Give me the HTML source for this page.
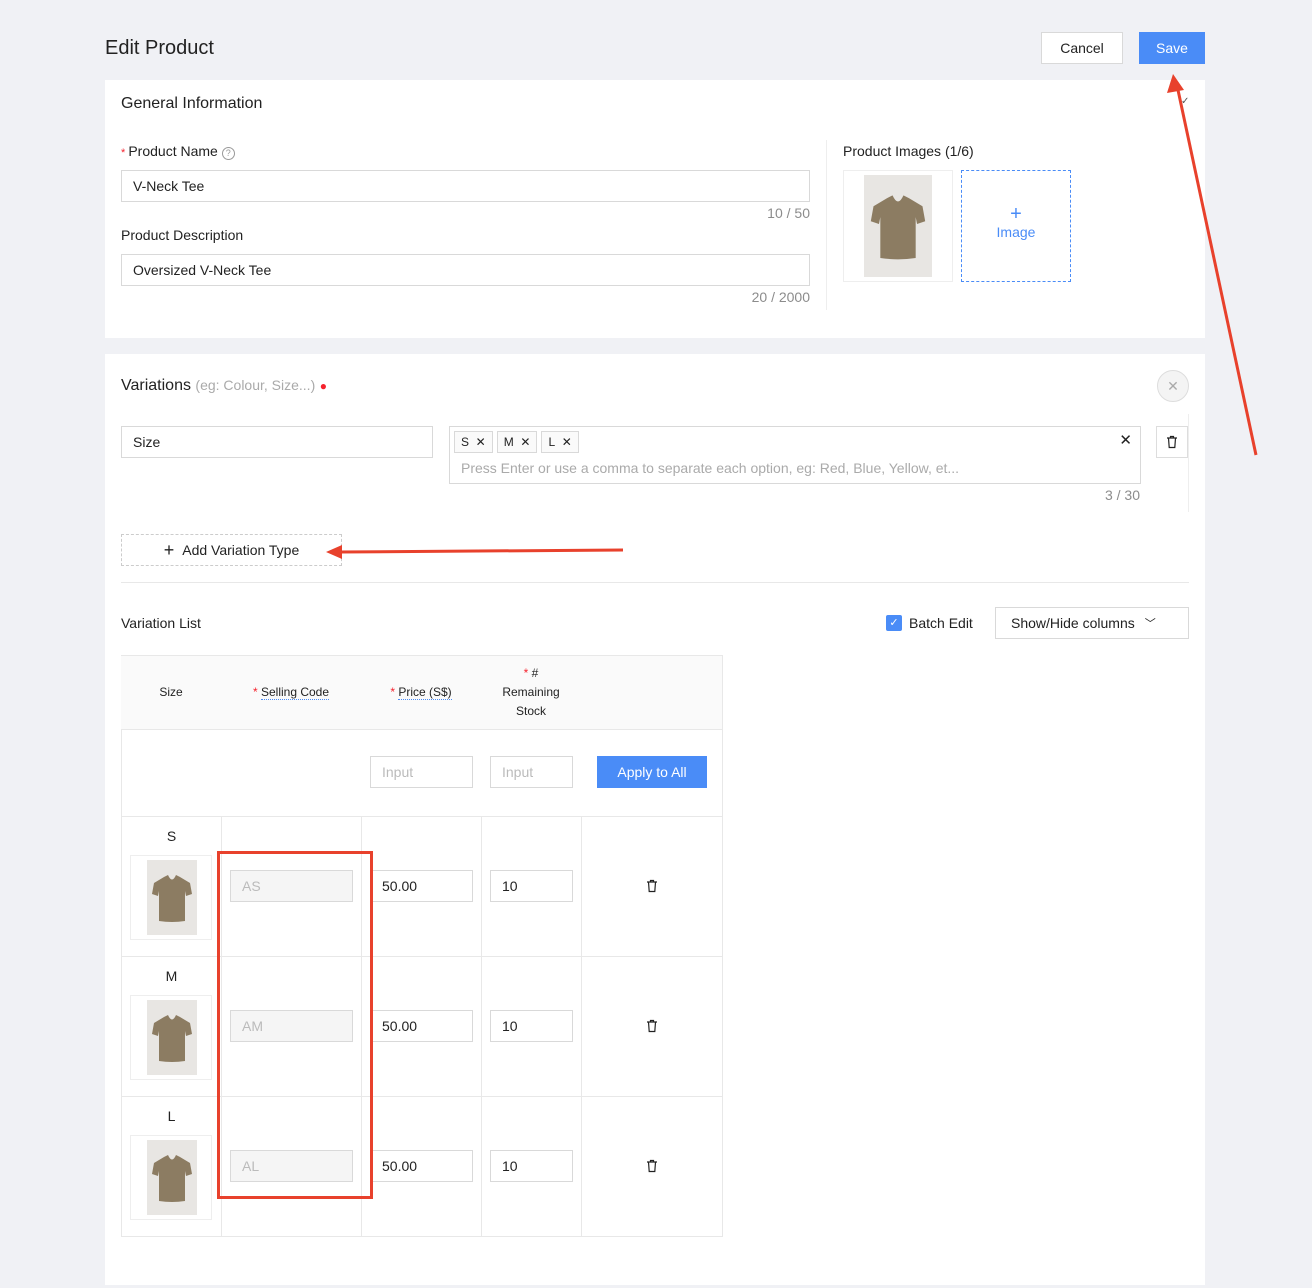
<!DOCTYPE html>
<html><head><meta charset="utf-8"><style>
*{box-sizing:border-box;margin:0;padding:0}
body{width:1312px;height:1288px;background:#f0f1f5;font-family:"Liberation Sans",sans-serif;color:#222;position:relative;overflow:hidden;font-size:14px}
.a{position:absolute}
.card{position:absolute;background:#fff}
.inp{position:absolute;border:1px solid #d9d9d9;background:#fff;font-size:14px;padding-left:11px;display:flex;align-items:center;color:#222}
.muted{color:#8c8c8c}
.red{color:#f5222d}
.tag{display:inline-block;border:1px solid #d9d9d9;background:#fafafa;font-size:12px;height:22px;line-height:20px;padding:0 6px;margin-right:4px}
.cell{position:absolute;border-right:1px solid #e8e8e8;border-bottom:1px solid #e8e8e8}
.th{font-size:12px;display:flex;align-items:center;justify-content:center;text-align:center;line-height:19px;background:#fafafa}
.u{border-bottom:1px dotted #4a8cf7}
.thumb{position:absolute;border:1px solid #eee;background:#fff}
</style></head><body>
<svg width="0" height="0" style="position:absolute"><defs>
<symbol id="tee" viewBox="0 0 50 75"><rect width="50" height="75" fill="#e8e6e3"/><path d="M17 17 L21 15 Q25 24 29 15 L33 17 L43 23 L45 34 L39 36 L38 31 L38 61 Q25 63 12 61 L12 31 L11 36 L5 34 L7 23 Z" fill="#8c7c62"/></symbol>
<symbol id="trash" viewBox="0 0 12 14"><path d="M1 3h10M4.5 3V1.5h3V3M2.5 3l.7 9.5h5.6l.7-9.5" fill="none" stroke="#222" stroke-width="1.2"/></symbol>
</defs></svg>

<div class="a" style="left:105px;top:37px;font-size:20px">Edit Product</div>
<div class="a" style="left:1041px;top:32px;width:82px;height:32px;border:1px solid #d9d9d9;background:#fff;display:flex;align-items:center;justify-content:center;font-size:14px">Cancel</div>
<div class="a" style="left:1139px;top:32px;width:66px;height:32px;background:#4a8cf7;color:#fff;display:flex;align-items:center;justify-content:center;font-size:14px">Save</div>

<div class="card" style="left:105px;top:80px;width:1100px;height:258px">
 <div class="a" style="left:16px;top:15px;font-size:16px">General Information</div>
 <div class="a" style="left:1076px;top:16px;font-size:10px;color:#555">✓</div>
 <div class="a" style="left:16px;top:63px;font-size:14px"><span class="red" style="font-size:11px">* </span>Product Name <span style="display:inline-block;width:13px;height:13px;border:1px solid #999;border-radius:50%;font-size:9px;text-align:center;line-height:11px;color:#999">?</span></div>
 <div class="inp" style="left:16px;top:90px;width:689px;height:32px">V-Neck Tee</div>
 <div class="a muted" style="left:600px;top:125px;width:105px;text-align:right">10 / 50</div>
 <div class="a" style="left:16px;top:147px">Product Description</div>
 <div class="inp" style="left:16px;top:174px;width:689px;height:32px">Oversized V-Neck Tee</div>
 <div class="a muted" style="left:600px;top:209px;width:105px;text-align:right">20 / 2000</div>
 <div class="a" style="left:721px;top:60px;width:1px;height:170px;background:#eee"></div>
 <div class="a" style="left:738px;top:63px">Product Images (1/6)</div>
 <div class="thumb" style="left:738px;top:90px;width:110px;height:112px"><svg class="a" style="left:20px;top:4px" width="68" height="102" preserveAspectRatio="none"><use href="#tee"/></svg></div>
 <div class="a" style="left:856px;top:90px;width:110px;height:112px;border:1px dashed #4a8cf7;color:#4a8cf7;text-align:center;padding-top:34px;line-height:18px"><div style="font-size:20px">+</div>Image</div>
</div>

<div class="card" style="left:105px;top:354px;width:1100px;height:931px">
 <div class="a" style="left:16px;top:23px;font-size:16px">Variations <span style="font-size:14px;color:#aaa">(eg: Colour, Size...)</span> <span class="red" style="font-size:12px">●</span></div>
 <div class="a" style="left:1052px;top:16px;width:32px;height:32px;border:1px solid #ddd;border-radius:50%;background:#f4f4f4;color:#aaa;text-align:center;line-height:30px;font-size:14px">✕</div>
 <div class="inp" style="left:16px;top:72px;width:312px;height:32px">Size</div>
 <div class="a" style="left:344px;top:72px;width:692px;height:58px;border:1px solid #d9d9d9">
  <div class="a" style="left:4px;top:4px"><span class="tag">S&nbsp; ✕</span><span class="tag">M&nbsp; ✕</span><span class="tag">L&nbsp; ✕</span></div>
  <div class="a" style="right:8px;top:4px;font-size:15px">✕</div>
  <div class="a" style="left:11px;top:33px;color:#aaa;font-size:14px">Press Enter or use a comma to separate each option, eg: Red, Blue, Yellow, et...</div>
 </div>
 <div class="a muted" style="left:960px;top:133px;width:75px;text-align:right">3 / 30</div>
 <div class="a" style="left:1083px;top:60px;width:1px;height:98px;background:#eee"></div>
 <div class="a" style="left:1051px;top:72px;width:32px;height:32px;border:1px solid #ddd;display:flex;align-items:center;justify-content:center"><svg width="12" height="14"><use href="#trash"/></svg></div>
 <div class="a" style="left:16px;top:180px;width:221px;height:32px;border:1px dashed #ccc;display:flex;align-items:center;justify-content:center;font-size:14px"><span style="font-size:18px;margin-right:8px">+</span>Add Variation Type</div>
 <div class="a" style="left:16px;top:228px;width:1068px;height:1px;background:#e8e8e8"></div>
 <div class="a" style="left:16px;top:261px">Variation List</div>
 <div class="a" style="left:781px;top:261px;width:16px;height:16px;background:#4a8cf7;border-radius:2px;color:#fff;font-size:11px;text-align:center;line-height:16px">✓</div>
 <div class="a" style="left:804px;top:261px">Batch Edit</div>
 <div class="a" style="left:890px;top:253px;width:194px;height:32px;border:1px solid #d9d9d9;display:flex;align-items:center;padding-left:15px">Show/Hide columns <span style="margin-left:10px;font-size:11px">﹀</span></div>
</div>

<!-- table -->
<div class="a" style="left:121px;top:655px;width:602px;height:582px;border-left:1px solid #e8e8e8;border-top:1px solid #e8e8e8"></div>
<div class="cell th" style="left:121px;top:656px;width:101px;height:74px">Size</div>
<div class="cell th" style="left:221px;top:656px;width:141px;height:74px"><span><span class="red">* </span><span class="u">Selling Code</span></span></div>
<div class="cell th" style="left:361px;top:656px;width:121px;height:74px"><span><span class="red">* </span><span class="u">Price (S$)</span></span></div>
<div class="cell th" style="left:481px;top:656px;width:101px;height:74px"><span><span class="red">* </span>#<br>Remaining<br>Stock</span></div>
<div class="cell th" style="left:581px;top:656px;width:142px;height:74px"></div>
<div class="cell" style="left:121px;top:729px;width:602px;height:88px;border-left:0"></div>
<div class="inp" style="left:370px;top:756px;width:103px;height:32px;color:#bbb">Input</div>
<div class="inp" style="left:490px;top:756px;width:83px;height:32px;color:#bbb">Input</div>
<div class="a" style="left:597px;top:756px;width:110px;height:32px;background:#4a8cf7;color:#fff;display:flex;align-items:center;justify-content:center;font-size:14px">Apply to All</div>

<!-- row S -->
<div class="cell" style="left:121px;top:816px;width:101px;height:141px"></div><div class="cell" style="left:221px;top:816px;width:141px;height:141px"></div><div class="cell" style="left:361px;top:816px;width:121px;height:141px"></div><div class="cell" style="left:481px;top:816px;width:101px;height:141px"></div><div class="cell" style="left:581px;top:816px;width:142px;height:141px"></div>
<div class="a" style="left:121px;top:828px;width:101px;text-align:center">S</div>
<div class="thumb" style="left:130px;top:855px;width:82px;height:85px"><svg class="a" style="left:16px;top:4px" width="50" height="75" preserveAspectRatio="none"><use href="#tee"/></svg></div>
<div class="inp" style="left:230px;top:870px;width:123px;height:32px;background:#f5f5f5;color:#bbb">AS</div>
<div class="inp" style="left:370px;top:870px;width:103px;height:32px">50.00</div>
<div class="inp" style="left:490px;top:870px;width:83px;height:32px">10</div>
<svg class="a" style="left:646px;top:879px" width="12" height="14"><use href="#trash"/></svg>
<!-- row M -->
<div class="cell" style="left:121px;top:956px;width:101px;height:141px"></div><div class="cell" style="left:221px;top:956px;width:141px;height:141px"></div><div class="cell" style="left:361px;top:956px;width:121px;height:141px"></div><div class="cell" style="left:481px;top:956px;width:101px;height:141px"></div><div class="cell" style="left:581px;top:956px;width:142px;height:141px"></div>
<div class="a" style="left:121px;top:968px;width:101px;text-align:center">M</div>
<div class="thumb" style="left:130px;top:995px;width:82px;height:85px"><svg class="a" style="left:16px;top:4px" width="50" height="75" preserveAspectRatio="none"><use href="#tee"/></svg></div>
<div class="inp" style="left:230px;top:1010px;width:123px;height:32px;background:#f5f5f5;color:#bbb">AM</div>
<div class="inp" style="left:370px;top:1010px;width:103px;height:32px">50.00</div>
<div class="inp" style="left:490px;top:1010px;width:83px;height:32px">10</div>
<svg class="a" style="left:646px;top:1019px" width="12" height="14"><use href="#trash"/></svg>
<!-- row L -->
<div class="cell" style="left:121px;top:1096px;width:101px;height:141px"></div><div class="cell" style="left:221px;top:1096px;width:141px;height:141px"></div><div class="cell" style="left:361px;top:1096px;width:121px;height:141px"></div><div class="cell" style="left:481px;top:1096px;width:101px;height:141px"></div><div class="cell" style="left:581px;top:1096px;width:142px;height:141px"></div>
<div class="a" style="left:121px;top:1108px;width:101px;text-align:center">L</div>
<div class="thumb" style="left:130px;top:1135px;width:82px;height:85px"><svg class="a" style="left:16px;top:4px" width="50" height="75" preserveAspectRatio="none"><use href="#tee"/></svg></div>
<div class="inp" style="left:230px;top:1150px;width:123px;height:32px;background:#f5f5f5;color:#bbb">AL</div>
<div class="inp" style="left:370px;top:1150px;width:103px;height:32px">50.00</div>
<div class="inp" style="left:490px;top:1150px;width:83px;height:32px">10</div>
<svg class="a" style="left:646px;top:1159px" width="12" height="14"><use href="#trash"/></svg>

<!-- annotations -->
<div class="a" style="left:217px;top:851px;width:156px;height:348px;border:3px solid #e8412c"></div>
<svg class="a" style="left:0;top:0" width="1312" height="1288">
 <line x1="1256" y1="455" x2="1178" y2="90" stroke="#e8412c" stroke-width="3"/>
 <polygon points="1173,74 1167,93 1184,90" fill="#e8412c"/>
 <line x1="623" y1="550" x2="340" y2="552" stroke="#e8412c" stroke-width="3"/>
 <polygon points="326,552 342,545 342,559" fill="#e8412c"/>
</svg>
</body></html>
